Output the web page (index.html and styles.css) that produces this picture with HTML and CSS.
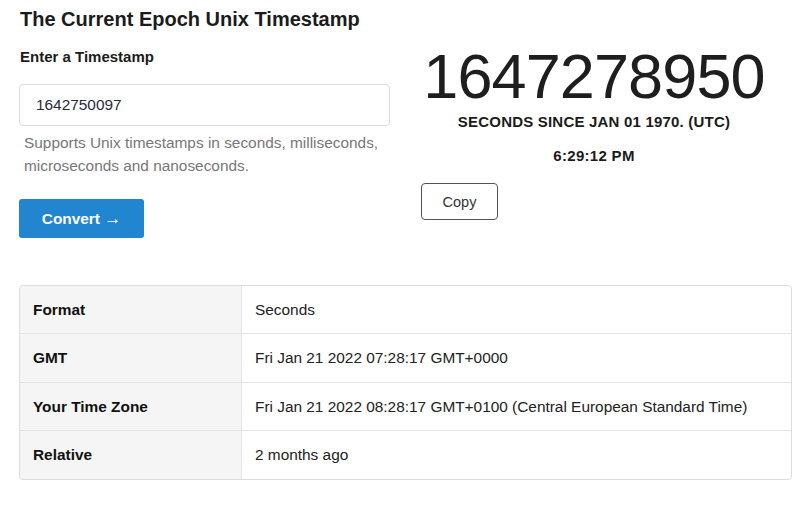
FILE: index.html
```html
<!DOCTYPE html>
<html lang="en">
<head>
<meta charset="utf-8">
<title>Epoch Unix Timestamp</title>
<link rel="stylesheet" href="styles.css">
</head>
<body>
<main class="page">
  <h1 class="title">The Current Epoch Unix Timestamp</h1>
  <div class="top">
    <section class="left">
      <label class="label" for="ts">Enter a Timestamp</label>
      <input id="ts" class="input" type="text" value="1642750097">
      <p class="help">Supports Unix timestamps in seconds, milliseconds, microseconds and nanoseconds.</p>
      <button class="convert">Convert <span class="arrow">→</span></button>
    </section>
    <section class="right">
      <div class="epoch">1647278950</div>
      <div class="since">SECONDS SINCE JAN 01 1970. (UTC)</div>
      <div class="clock">6:29:12 PM</div>
      <button class="copy">Copy</button>
    </section>
  </div>
  <table class="result">
    <tr><th>Format</th><td>Seconds</td></tr>
    <tr><th>GMT</th><td>Fri Jan 21 2022 07:28:17 GMT+0000</td></tr>
    <tr><th>Your Time Zone</th><td>Fri Jan 21 2022 08:28:17 GMT+0100 (Central European Standard Time)</td></tr>
    <tr><th>Relative</th><td>2 months ago</td></tr>
  </table>
</main>
</body>
</html>
```
FILE: styles.css
```css
* { box-sizing: border-box; }
html, body { margin: 0; padding: 0; background: #fff; }
body {
  font-family: "Liberation Sans", Arial, sans-serif;
  color: #222;
}
.page {
  padding: 6px 21px 0 19px;
}
.title {
  margin: 0 0 0 1px;
  font-size: 20px;
  line-height: 26px;
  font-weight: bold;
  color: #1b1b1b;
}
.top {
  display: grid;
  grid-template-columns: 371px 1fr;
  column-gap: 11px;
}
.left {
  display: flex;
  flex-direction: column;
  align-items: flex-start;
}
.label {
  margin: 16px 0 0 1px;
  font-size: 15px;
  line-height: 18px;
  font-weight: bold;
  color: #1b1b1b;
}
.input {
  margin-top: 18px;
  width: 371px;
  height: 42px;
  border: 1px solid #dcdcdc;
  border-radius: 4px;
  padding: 0 16px;
  font-family: inherit;
  font-size: 15.4px;
  color: #2a2a3a;
  outline: none;
}
.help {
  margin: 5px 0 0 5px;
  font-size: 15.4px;
  line-height: 23px;
  color: #777;
}
.convert {
  margin-top: 22px;
  width: 125px;
  height: 39px;
  border: none;
  border-radius: 3px;
  background: #2185d0;
  color: #fff;
  font-family: inherit;
  font-size: 15.4px;
  font-weight: bold;
  cursor: pointer;
}
.arrow {
  font-size: 17px;
  font-weight: normal;
}
.right {
  display: flex;
  flex-direction: column;
  align-items: center;
}
.epoch {
  margin-top: 13px;
  font-size: 63px;
  line-height: 63px;
  letter-spacing: -0.9px;
  color: #1e1e1e;
}
.since {
  margin-top: 5px;
  font-size: 15px;
  line-height: 18px;
  font-weight: bold;
  letter-spacing: 0.2px;
  color: #1b1b1b;
}
.clock {
  margin-top: 16px;
  font-size: 15px;
  line-height: 18px;
  font-weight: bold;
  letter-spacing: 0.3px;
  color: #1b1b1b;
}
.copy {
  align-self: flex-start;
  margin: 18px 0 0 20px;
  width: 77px;
  height: 37px;
  border: 1px solid #555;
  border-radius: 4px;
  background: #fff;
  color: #333;
  font-family: inherit;
  font-size: 14.5px;
  cursor: pointer;
}
.result {
  margin-top: 47px;
  width: 773px;
  border-collapse: separate;
  border-spacing: 0;
  border: 1px solid #ddd;
  border-radius: 4px;
  font-size: 15.4px;
}
.result th, .result td {
  height: 49px;
  padding: 0 13px;
  text-align: left;
  vertical-align: middle;
  border-top: 1px solid #e4e4e4;
}
.result tr:first-child th, .result tr:first-child td { border-top: none; height: 47px; }
.result tr:nth-child(3) th, .result tr:nth-child(3) td { height: 48px; }
.result th {
  width: 222px;
  background: #f5f5f5;
  font-weight: bold;
  color: #111;
  border-right: 1px solid #e4e4e4;
  border-radius: 0;
}
.result tr:first-child th { border-top-left-radius: 4px; }
.result tr:last-child th { border-bottom-left-radius: 4px; }
.result td {
  color: #222;
}
```
